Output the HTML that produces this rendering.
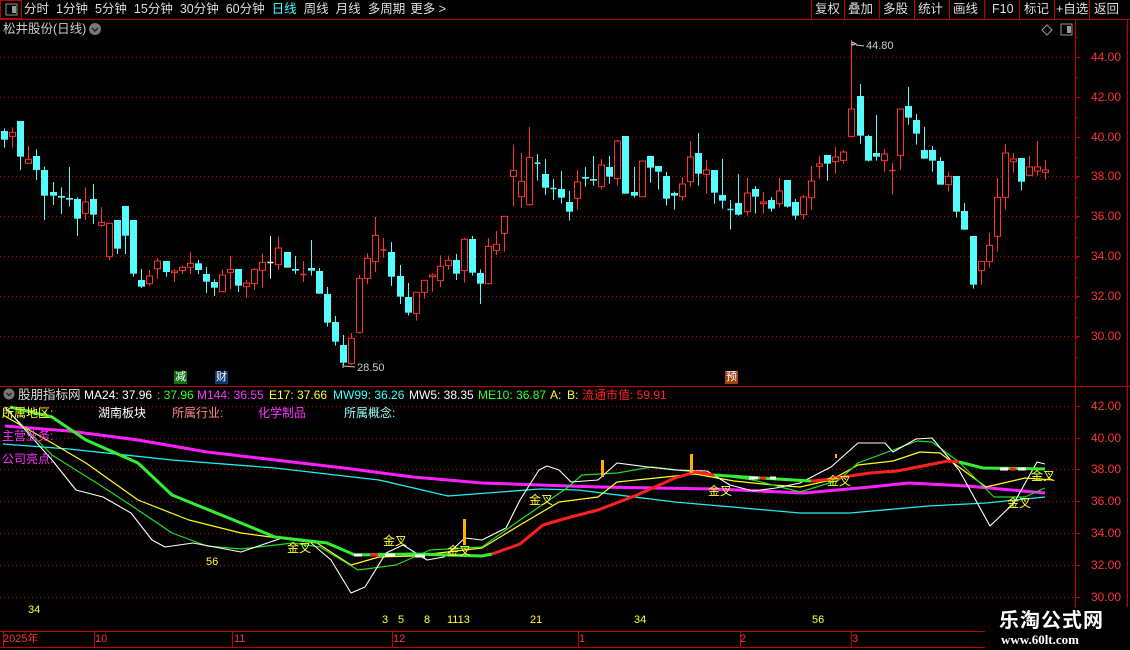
<!DOCTYPE html>
<html><head><meta charset="utf-8">
<style>
html,body{margin:0;padding:0;background:#000;width:1130px;height:650px;overflow:hidden;font-family:"Liberation Sans","Noto Sans CJK SC",sans-serif;}
#wrap{position:relative;width:1130px;height:650px;}
.t{position:absolute;white-space:nowrap;font-size:12px;line-height:14px;}
svg{position:absolute;left:0;top:0;}
</style></head><body><div id="wrap">
<svg id="s" width="1130" height="650" xmlns="http://www.w3.org/2000/svg"></svg>

<!-- top bar -->
<div class="t" style="left:24px;top:2px;color:#ddd;font-size:12.5px;word-spacing:0">
<span style="margin-right:7px">分时</span><span style="margin-right:7px">1分钟</span><span style="margin-right:7px">5分钟</span><span style="margin-right:7px">15分钟</span><span style="margin-right:7px">30分钟</span><span style="margin-right:7px">60分钟</span><span style="margin-right:7px;color:#4ff">日线</span><span style="margin-right:7px">周线</span><span style="margin-right:7px">月线</span><span style="margin-right:5px">多周期</span><span>更多 &gt;</span></div>
<div class="t" style="left:815px;top:2px;color:#ddd;font-size:12.5px">复权</div>
<div class="t" style="left:848px;top:2px;color:#ddd;font-size:12.5px">叠加</div>
<div class="t" style="left:883px;top:2px;color:#ddd;font-size:12.5px">多股</div>
<div class="t" style="left:918px;top:2px;color:#ddd;font-size:12.5px">统计</div>
<div class="t" style="left:953px;top:2px;color:#ddd;font-size:12.5px">画线</div>
<div class="t" style="left:992px;top:2px;color:#ddd;font-size:12.5px">F10</div>
<div class="t" style="left:1024px;top:2px;color:#ddd;font-size:12.5px">标记</div>
<div class="t" style="left:1056px;top:2px;color:#ddd;font-size:12.5px">+自选</div>
<div class="t" style="left:1094px;top:2px;color:#ddd;font-size:12.5px">返回</div>

<div class="t" style="left:3px;top:22px;color:#ccc;font-size:12.5px">松井股份(日线)</div>

<div class="t" style="left:866px;top:39px;color:#ccc;font-size:11px">44.80</div>
<div class="t" style="left:357px;top:361px;color:#ccc;font-size:11px">28.50</div>

<div class="t" style="left:174px;top:371px;width:13px;height:13px;background:#107010;color:#fff;font-size:11px;line-height:13px;text-align:center">减</div>
<div class="t" style="left:215px;top:371px;width:13px;height:13px;background:#103a70;color:#fff;font-size:11px;line-height:13px;text-align:center">财</div>
<div class="t" style="left:725px;top:371px;width:13px;height:13px;background:#a04010;color:#fff;font-size:11px;line-height:13px;text-align:center">预</div>

<!-- indicator legend -->
<div class="t" style="left:18px;top:388px;color:#ddd;font-size:12.5px">股朋指标网</div>
<div class="t" style="left:84px;top:388px;color:#fff">MA24: 37.96</div>
<div class="t" style="left:157px;top:388px;color:#3f3">: 37.96</div>
<div class="t" style="left:197px;top:388px;color:#f3f">M144: 36.55</div>
<div class="t" style="left:269px;top:388px;color:#ff3">E17: 37.66</div>
<div class="t" style="left:333px;top:388px;color:#4ff">MW99: 36.26</div>
<div class="t" style="left:409px;top:388px;color:#fff">MW5: 38.35</div>
<div class="t" style="left:478px;top:388px;color:#3f3">ME10: 36.87</div>
<div class="t" style="left:550px;top:388px;color:#ff3">A:</div>
<div class="t" style="left:567px;top:388px;color:#ff3">B:</div>
<div class="t" style="left:582px;top:388px;color:#f22">流通市值: 59.91</div>

<div class="t" style="left:2px;top:406px;color:#ff3">所属地区:</div>
<div class="t" style="left:98px;top:406px;color:#fff">湖南板块</div>
<div class="t" style="left:172px;top:406px;color:#f88">所属行业:</div>
<div class="t" style="left:258px;top:406px;color:#f3f">化学制品</div>
<div class="t" style="left:344px;top:406px;color:#9ff">所属概念:</div>
<div class="t" style="left:2px;top:429px;color:#f3f">主营业务:</div>
<div class="t" style="left:2px;top:452px;color:#f3f">公司亮点:</div>

<!-- numbers -->
<div class="t" style="left:28px;top:603px;color:#ff3;font-size:11px">34</div>
<div class="t" style="left:206px;top:555px;color:#ff3;font-size:11px">56</div>
<div class="t" style="left:382px;top:613px;color:#ff3;font-size:11px">3</div>
<div class="t" style="left:398px;top:613px;color:#ff3;font-size:11px">5</div>
<div class="t" style="left:424px;top:613px;color:#ff3;font-size:11px">8</div>
<div class="t" style="left:447px;top:613px;color:#ff3;font-size:11px">1113</div>
<div class="t" style="left:530px;top:613px;color:#ff3;font-size:11px">21</div>
<div class="t" style="left:634px;top:613px;color:#ff3;font-size:11px">34</div>
<div class="t" style="left:812px;top:613px;color:#ff3;font-size:11px">56</div>

<!-- time axis -->
<div class="t" style="left:3px;top:632px;color:#f33;font-size:11px">2025年</div>
<div class="t" style="left:95px;top:632px;color:#f33;font-size:11px">10</div>
<div class="t" style="left:234px;top:632px;color:#f33;font-size:11px">11</div>
<div class="t" style="left:393px;top:632px;color:#f33;font-size:11px">12</div>
<div class="t" style="left:579px;top:632px;color:#f33;font-size:11px">1</div>
<div class="t" style="left:740px;top:632px;color:#f33;font-size:11px">2</div>
<div class="t" style="left:852px;top:632px;color:#f33;font-size:11px">3</div>

<!-- watermark -->
<div style="position:absolute;left:985px;top:607px;width:145px;height:43px;background:#000"></div>
<div class="t" style="left:999px;top:609px;color:#fff;font-size:20px;line-height:24px;font-weight:bold;letter-spacing:1px">乐淘公式网</div>
<div class="t" style="left:1001px;top:633px;color:#fff;font-size:13px;font-weight:bold;font-family:'Liberation Serif',serif">www.60lt.com</div>
</div>
<script>
var s=document.getElementById('s');var h='';
function L(x1,y1,x2,y2,c,w,d){h+='<line x1="'+x1+'" y1="'+y1+'" x2="'+x2+'" y2="'+y2+'" stroke="'+c+'" stroke-width="'+(w||1)+'"'+(d?' stroke-dasharray="'+d+'"':'')+'/>';}
function R(x,y,w,hh,f,st){h+='<rect x="'+x+'" y="'+y+'" width="'+w+'" height="'+hh+'" fill="'+f+'"'+(st?' stroke="'+st+'"':'')+'/>';}
function T(x,y,t,c,fs,a){h+='<text x="'+x+'" y="'+y+'" fill="'+c+'" font-size="'+(fs||11)+'" font-family="Liberation Sans,Noto Sans CJK SC,sans-serif"'+(a?' text-anchor="'+a+'"':'')+'>'+t+'</text>';}
var RED='#c00000';
// top bar
L(0,19.5,1130,19.5,RED);
R(0.5,0.5,21,18,'none',RED);
R(6,4,11,11,'none','#999');R(12,6,4,7,'#999');
[811,844,879,914,949,984,1019,1054,1089].forEach(function(x){L(x+.5,0,x+.5,19,RED);});
// title icon
h+='<circle cx="95" cy="29" r="6" fill="#777"/><path d="M92 28 L95 31 L98 28" stroke="#222" stroke-width="1.5" fill="none"/>';
// top right icons
h+='<path d="M1047 25 L1052 30 L1047 35 L1042 30 Z" stroke="#999" fill="none"/>';
R(1061,24,11,11,'none','#999');R(1067,26,4,7,'#999');
// axes
L(1075.5,20,1075.5,650,RED);L(1127.5,20,1127.5,650,RED);
L(0,386.5,1130,386.5,RED);
L(0,631.5,985,631.5,RED);L(0,647.5,985,647.5,RED);
// main grid
[57,97,137,176,216,256,296,336].forEach(function(y,i){L(0,y+.5,1075,y+.5,'#b00','1','1,3');L(1075,y+.5,1080,y+.5,RED);});
[44,42,40,38,36,34,32,30].forEach(function(p,i){T(1091,[61,101,141,180,220,260,300,340][i],p.toFixed(2),'#f33',12);});
for(var y=37;y<380;y+=20)L(1075,y+.5,1078,y+.5,RED);
// lower grid
[406,438,469,501,533,565,597].forEach(function(y,i){L(0,y+.5,1075,y+.5,'#b00','1','1,3');L(1075,y+.5,1080,y+.5,RED);T(1091,y+4,(42-2*i).toFixed(2),'#f33',12);});
// time ticks
[3,94,232,392,578,740,851].forEach(function(x){L(x+.5,632,x+.5,647,RED);});
// legend circle
h+='<circle cx="9" cy="394" r="5.5" fill="#777"/><path d="M6.5 393 L9 395.5 L11.5 393" stroke="#222" stroke-width="1.3" fill="none"/>';
// candles
var g1=[['c',63,89,55,113],['r',67,79,52,113],['c',33,140,33,180],['r',148,160,108,160],['c',138,180,118,210],['c',180,257,170,330],['c',246,257,216,285],['c',258,263,232,312],['c',264,269,171,290],['c',267,326,262,378],['r',276,310,232,330],['c',267,314,222,342],['r',337,346,291,350],['r',340,440,340,450],['c',330,416,330,432],['c',288,377,288,432],['c',330,491,330,500],['c',510,530,477,534],['r',498,521,480,527],['r',453,476,444,506],['c',453,486,453,500],['r',483,488,478,516],['r',472,482,466,492],['r',460,472,426,492],['c',460,480,450,492],['c',492,515,471,549],['c',516,533,508,558],['r',495,545,478,545],['r',478,488,438,537],['c',477,527,477,546],['r',519,530,510,563],['r',478,521,475,540],['r',457,481,430,533],['w',456,458,378,506],['r',414,464,381,480],['c',426,473,426,473],['c',477,482,438,492],['r',492,494,453,516],['c',474,482,390,497],['c',483,551,474,551],['c',552,638,531,650],['c',636,695,618,707],['c',705,758,675,765],['r',685,761,669,765],['r',505,667,495,670],['r',445,505,430,522],['r',376,455,321,486],['r',418,421,384,443],['c',426,500,396,528],['c',498,560,465,582],['c',561,608,519,617],['r',547,611,547,632],['r',511,547,511,566],['r',495,500,490,545],['r',469,512,436,531],['r',451,467,437,480],['c',450,491,432,510],['r',388,482,384,518],['c',387,488,378,497],['c',489,521,478,582],['r',409,521,384,523],['r',403,421,363,435],['r',319,370,319,425],['r',181,199,105,290],['r',214,260,129,293],['r',142,284,51,287],['c',158,160,132,212]];
var g2=[['c',417,458,372,480],['c',459,461,432,495],['c',462,488,408,506],['c',501,530,468,557],['r',441,490,405,524],['c',426,431,396,455],['c',432,437,363,452],['r',390,455,372,464],['c',396,425,363,446],['r',318,431,315,452],['c',303,476,303,476],['c',471,482,396,488],['r',378,485,378,485],['c',363,398,363,443],['c',393,410,393,464],['c',423,491,411,512],['c',474,482,470,524],['r',447,485,426,497],['r',366,440,318,455],['c',354,416,294,452],['r',405,418,375,476],['c',405,473,405,506],['c',480,497,372,521],['c',522,523,495,584],['c',504,539,417,542],['r',474,530,429,542],['c',462,485,453,536],['r',501,506,471,536],['c',495,521,486,530],['r',468,506,429,518],['c',435,515,435,518],['c',501,542,492,554],['r',486,539,480,554],['r',438,488,393,524],['r',387,394,363,431],['c',360,386,360,437],['r',366,380,336,416],['r',351,376,345,386],['r',222,304,15,304],['c',183,302,147,326],['c',303,377,300,380],['c',354,365,240,377],['r',357,377,342,410],['r',405,407,384,479],['r',222,361,222,404],['c',213,248,156,269],['c',255,296,237,329],['c',345,371,276,371],['c',345,377,333,410],['c',378,449,366,449],['r',424,449,411,470],['c',423,530,423,548],['c',528,584,504,584],['c',603,749,603,761],['r',679,707,679,749],['r',631,680,594,698],['r',487,604,429,650],['r',354,487,327,524],['r',372,380,354,413],['c',369,440,369,467],['r',396,421,363,422],['r',396,408,318,422],['r',405,412,375,434]];
function cand(i,d,off){var x=4.1+i*8.07;var bt=off+d[1]/3,bb=off+d[2]/3,wt=off+d[3]/3,wb=off+d[4]/3;var xc=Math.round(x)+.5;
 var col=d[0]=='r'?'#ff3232':(d[0]=='w'?'#fff':'#54fcfc');
 if(bb-bt<1.5){L(xc,wt,xc,wb,col);L(xc-3,bt+.5,xc+3,bt+.5,col,1.5);return;}
 if(d[0]=='r'){L(xc,wt,xc,bt,col);L(xc,bb,xc,wb,col);R(xc-3,bt,6,bb-bt,'#000',col);}
 else{L(xc,wt,xc,wb,col);R(xc-3.5,bt,7,bb-bt,col);}}
g1.forEach(function(d,i){cand(i,d,110);});
g2.forEach(function(d,i){cand(i+67,d,35);});
// peak / low markers
h+='<path d="M852 42 L852 46 M852 42 L856 44 L852 45 M856 45 L864 46" stroke="#ccc" fill="none"/>';
h+='<path d="M343 364 L343 368 M343 366 L355 367" stroke="#ccc" fill="none"/>';
// lower lines
function P(pts,c,w){h+='<polyline points="'+pts+'" fill="none" stroke="'+c+'" stroke-width="'+w+'" stroke-linejoin="round"/>';}
P('5,426 69,431 138,440 207,452 275,460 344,468 413,477 482,483 540,485 598,487 714,489 804,493 870,487 909,483 967,486 1045,493','#ff20ff',3);
P('3,444 69,449 172,460 275,468 379,480 448,496 540,489 578,490 675,502 800,513 850,513 928,506 986,503 1045,497','#22eeee',1.3);
P('3,415 52,443 86,463 138,500 189,520 241,533 293,540 317,543 351,565 379,557 413,556 482,548 520,525 559,502 598,497 617,482 656,478 695,474 734,481 773,485 800,487 831,480 858,465 893,461 920,452 940,453 986,487 1025,478 1053,480','#ffff20',1.2);
P('7,410 52,455 103,487 138,510 172,533 207,546 241,549 293,543 320,547 358,570 396,565 430,550 482,547 520,520 567,488 582,475 617,473 652,467 695,472 753,480 800,492 839,480 858,463 893,450 917,441 932,442 959,462 994,497 1025,497 1045,488','#22dd22',1.2);
P('5,407 52,460 76,490 103,497 131,513 152,540 165,547 193,543 241,552 282,538 310,542 331,560 351,593 365,587 386,553 403,545 427,560 444,557 465,538 482,540 506,528 520,500 539,470 547,466 559,470 571,482 598,480 617,463 648,467 675,470 707,471 730,485 753,491 776,488 800,483 831,467 858,443 885,443 893,452 916,439 932,438 959,470 990,526 1014,503 1037,462 1045,464','#fff',1.1);
P('10,407 52,417 86,440 138,463 172,495 241,523 275,537 327,543 355,555 413,554 482,556 492,554','#33ee33',3);
P('492,554 520,544 543,525 567,518 598,510 637,495 675,478 695,472 714,475','#ff2020',3);
P('714,475 760,478 811,481','#33ee33',3);
P('811,481 823,480 870,473 897,471 948,461 959,462','#ff2020',3);
P('959,462 983,468 1045,469','#33ee33',3);
// small white/red segments on thick line
L(354,555,362,555,'#fff',3);L(370,555,378,555,'#f22',3);L(385,555,395,555,'#fff',3);L(415,556,425,556,'#fff',3);
L(749,478,758,478,'#fff',3);L(760,478,766,478,'#f22',3);L(770,478,776,478,'#fff',3);
L(1000,469,1008,469,'#fff',3);L(1010,469,1016,469,'#f22',3);L(1018,469,1026,469,'#fff',3);
// orange bars
R(463,519,3,26,'#ffb000');R(601,460,3,17,'#ffb000');R(690,454,3,19,'#ffb000');R(835,454,2,4,'#ffb000');
// 金叉
[[287,552],[383,545],[447,555],[529,504],[708,495],[827,485],[1007,507],[1031,480]].forEach(function(p){T(p[0],p[1],'金叉','#ff3',12);});
s.innerHTML=h;
</script>
</body></html>
